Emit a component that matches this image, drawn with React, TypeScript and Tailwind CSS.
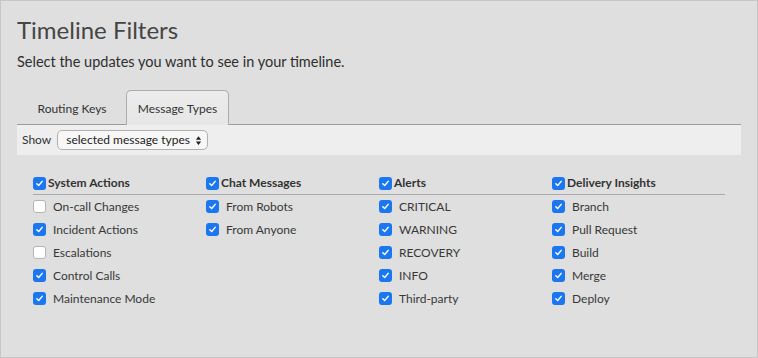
import { useState } from "react";

type Group = { title: string; items: { label: string; checked: boolean }[] };

const groups: Group[] = [
  {
    title: "System Actions",
    items: [
      { label: "On-call Changes", checked: false },
      { label: "Incident Actions", checked: true },
      { label: "Escalations", checked: false },
      { label: "Control Calls", checked: true },
      { label: "Maintenance Mode", checked: true },
    ],
  },
  {
    title: "Chat Messages",
    items: [
      { label: "From Robots", checked: true },
      { label: "From Anyone", checked: true },
    ],
  },
  {
    title: "Alerts",
    items: [
      { label: "CRITICAL", checked: true },
      { label: "WARNING", checked: true },
      { label: "RECOVERY", checked: true },
      { label: "INFO", checked: true },
      { label: "Third-party", checked: true },
    ],
  },
  {
    title: "Delivery Insights",
    items: [
      { label: "Branch", checked: true },
      { label: "Pull Request", checked: true },
      { label: "Build", checked: true },
      { label: "Merge", checked: true },
      { label: "Deploy", checked: true },
    ],
  },
];

const Box = ({ checked }: { checked: boolean }) =>
  checked ? (
    <span className="flex h-[13px] w-[13px] shrink-0 items-center justify-center rounded-[3px] bg-[#1b77f0]">
      <svg viewBox="0 0 10 10" className="h-[9px] w-[9px]">
        <path d="M2 5.2 L4.1 7.3 L8 2.6" fill="none" stroke="white" strokeWidth="1.6" strokeLinecap="round" strokeLinejoin="round" />
      </svg>
    </span>
  ) : (
    <span className="h-[13px] w-[13px] shrink-0 rounded-[3px] border border-[#b5b5b5] bg-white" />
  );

export default function App() {
  const [tab, setTab] = useState("types");

  return (
    <div
      className="h-[358px] w-[758px] border border-[#c6c6c6] bg-[#dfdfdf] pl-[16px] pr-[16px] text-[#3d3d3d]"
      style={{ fontFamily: "Lato, 'Noto Sans', sans-serif" }}
    >
      <h1 className="pt-[14px] text-[24px] leading-[30px] text-[#454545]">Timeline Filters</h1>
      <p className="mt-[7px] text-[14.5px] leading-[20px] text-[#2e2e2e]">
        Select the updates you want to see in your timeline.
      </p>

      {/* Tabs */}
      <div className="mt-[18px] flex h-[35px] items-end border-b border-[#9c9c9c] pl-[1px]">
        <button
          onClick={() => setTab("keys")}
          className="mb-[-1px] flex h-[35px] w-[108px] items-center justify-center pt-[2px] text-[12px] text-[#333]"
        >
          Routing Keys
        </button>
        <button
          onClick={() => setTab("types")}
          className="mb-[-1px] flex h-[35px] w-[103px] items-center justify-center rounded-t-[5px] border border-b-0 border-[#acacac] bg-gradient-to-b from-[#ececec] to-[#e6e6e6] pt-[2px] text-[12px] text-[#333]"
        >
          Message Types
        </button>
      </div>

      <div className="flex h-[30px] items-center gap-[6px] bg-[#eeeeee] pl-[5px]">
        <span className="text-[12px] text-[#333]">Show</span>
        <div className="flex h-[20px] w-[151px] items-center justify-between whitespace-nowrap rounded-[5px] border border-[#b0b0b0] bg-[#f7f7f7] pl-[8px] pr-[5px] text-[12px] text-[#222]">
          <span>selected message types</span>
          <svg viewBox="0 0 8 12" className="h-[11px] w-[7px]">
            <path d="M4 1 L7 5 H1 Z M4 11 L7 7 H1 Z" fill="#222" />
          </svg>
        </div>
      </div>

      {/* Groups */}
      {tab === "types" && (
        <div className="ml-[16px] mr-[16px] mt-[20px]">
          <div className="grid grid-cols-[173px_173px_173px_173px] border-b border-[#a9a9a9] pb-[3px]">
            {groups.map((g) => (
              <div key={g.title} className="flex items-center gap-[2px]">
                <Box checked />
                <span className="text-[12px] font-bold leading-[16px] text-[#333]">{g.title}</span>
              </div>
            ))}
          </div>
          <div className="grid grid-cols-[173px_173px_173px_173px]">
            {groups.map((g) => (
              <div key={g.title} className="flex flex-col">
                {g.items.map((it) => (
                  <div key={it.label} className="flex h-[23px] items-center gap-[7px]">
                    <Box checked={it.checked} />
                    <span className="text-[12px] text-[#383838]">{it.label}</span>
                  </div>
                ))}
              </div>
            ))}
          </div>
        </div>
      )}
    </div>
  );
}
